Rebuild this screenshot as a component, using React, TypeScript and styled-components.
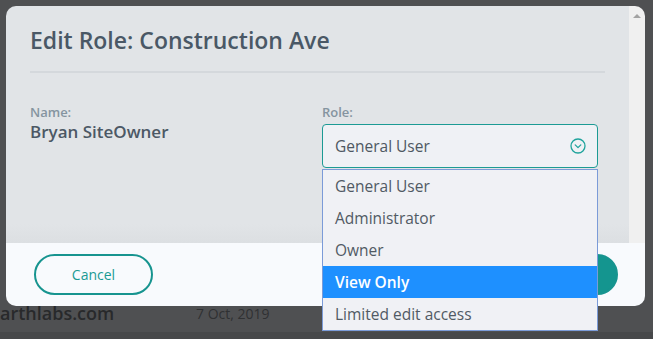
import React from 'react';
import styled, { createGlobalStyle } from 'styled-components';

const GlobalStyle = createGlobalStyle`
  html, body {
    margin: 0;
    padding: 0;
    background: #4f5052;
  }
  body {
    font-family: "Open Sans", Lato, sans-serif;
  }
`;

const Page = styled.div`
  position: relative;
  width: 653px;
  height: 339px;
  overflow: hidden;
  background: #4f5052;
`;

const BackRows = styled.div`
  display: flex;
  flex-direction: column;
  padding-top: 294px;
`;

const BackRow = styled.div`
  display: flex;
  align-items: center;
  height: 38px;
  color: #28292b;
`;

const BackEmail = styled.div`
  width: 196px;
  font-size: 18px;
  font-weight: 600;
`;

const BackDate = styled.div`
  font-size: 14px;
  color: #303133;
`;

const BackBand = styled.div`
  height: 20px;
  background: #47484a;
`;

const Modal = styled.div`
  position: absolute;
  top: 6px;
  left: 6px;
  width: 639px;
  height: 300px;
  display: flex;
  flex-direction: column;
`;

const Body = styled.div`
  display: flex;
  height: 237px;
`;

const Content = styled.div`
  flex: 1;
  padding: 19px 24px 0;
  background: linear-gradient(to bottom, #e1e4e7 92%, #dcdfe2 100%);
  border-top-left-radius: 10px;
`;

const Scrollbar = styled.div`
  width: 16px;
  background: #f0f0f0;
  border-top-right-radius: 10px;
  display: flex;
  justify-content: center;
  padding-top: 8px;
  box-sizing: border-box;
`;

const ArrowUp = styled.div`
  width: 0;
  height: 0;
  border-left: 4px solid transparent;
  border-right: 4px solid transparent;
  border-bottom: 4px solid #a3a3a3;
`;

const Title = styled.h2`
  margin: 0;
  font-size: 23px;
  line-height: 30px;
  font-weight: 600;
  color: #4a5866;
`;

const Divider = styled.div`
  height: 2px;
  margin-top: 16px;
  background: #d4d8dc;
`;

const Fields = styled.div`
  display: grid;
  grid-template-columns: 292px 276px;
  margin-top: 31px;
`;

const Field = styled.div`
  position: relative;
  display: flex;
  flex-direction: column;
`;

const Label = styled.div`
  font-size: 13px;
  line-height: 16px;
  font-weight: 600;
  color: #8594a0;
`;

const Value = styled.div`
  margin-top: 1px;
  font-size: 17px;
  line-height: 22px;
  font-weight: 600;
  color: #4c5865;
`;

const Select = styled.div`
  margin-top: 4px;
  height: 44px;
  box-sizing: border-box;
  border: 1px solid #1c9a94;
  border-radius: 4px;
  background: #eff1f5;
  display: flex;
  align-items: center;
  justify-content: space-between;
  padding: 0 11px 0 12px;
  font-size: 15.5px;
  color: #4e5862;
`;

const Menu = styled.ul`
  position: absolute;
  top: 65px;
  left: 0;
  width: 276px;
  margin: 0;
  padding: 0;
  list-style: none;
  box-sizing: border-box;
  border: 1px solid #7b9bd8;
  background: #f0f1f5;
  z-index: 2;
`;

const MenuItem = styled.li<{ $active?: boolean }>`
  height: 32px;
  display: flex;
  align-items: center;
  padding-left: 12px;
  font-size: 15.5px;
  color: ${p => (p.$active ? '#ffffff' : '#505a64')};
  background: ${p => (p.$active ? '#1e90ff' : 'transparent')};
  font-weight: ${p => (p.$active ? 600 : 400)};
`;

const Footer = styled.div`
  flex: 1;
  display: flex;
  align-items: center;
  justify-content: space-between;
  padding: 0 27px 0 28px;
  background: #f8fafd;
  border-radius: 0 0 10px 10px;
`;

const Button = styled.button<{ $primary?: boolean }>`
  width: 119px;
  height: 41px;
  box-sizing: border-box;
  border-radius: 21px;
  border: 2px solid #17948f;
  background: ${p => (p.$primary ? '#14958f' : 'transparent')};
  color: ${p => (p.$primary ? '#ffffff' : '#1a9a94')};
  font-family: "Open Sans", Lato, sans-serif;
  font-size: 14px;
  padding: 0;
`;

const ChevronCircle = () => (
  <svg width="16" height="16" viewBox="0 0 16 16" fill="none" stroke="#1fa39c" strokeWidth="1.3">
    <circle cx="8" cy="8" r="7" />
    <path d="M5.2 6.9 L8 9.6 L10.8 6.9" strokeLinecap="round" strokeLinejoin="round" />
  </svg>
);

const roles = ['General User', 'Administrator', 'Owner', 'View Only', 'Limited edit access'];

export default function App() {
  return (
    <Page>
      <GlobalStyle />
      <BackRows>
        <BackRow>
          <BackEmail>arthlabs.com</BackEmail>
          <BackDate>7 Oct, 2019</BackDate>
        </BackRow>
        <BackBand />
      </BackRows>
      <Modal>
        <Body>
          <Content>
            <Title>Edit Role: Construction Ave</Title>
            <Divider />
            <Fields>
              <Field>
                <Label>Name:</Label>
                <Value>Bryan SiteOwner</Value>
              </Field>
              <Field>
                <Label>Role:</Label>
                <Select>
                  <span>General User</span>
                  <ChevronCircle />
                </Select>
                <Menu>
                  {roles.map(r => (
                    <MenuItem key={r} $active={r === 'View Only'}>
                      {r}
                    </MenuItem>
                  ))}
                </Menu>
              </Field>
            </Fields>
          </Content>
          <Scrollbar>
            <ArrowUp />
          </Scrollbar>
        </Body>
        <Footer>
          <Button>Cancel</Button>
          <Button $primary>Save</Button>
        </Footer>
      </Modal>
    </Page>
  );
}
